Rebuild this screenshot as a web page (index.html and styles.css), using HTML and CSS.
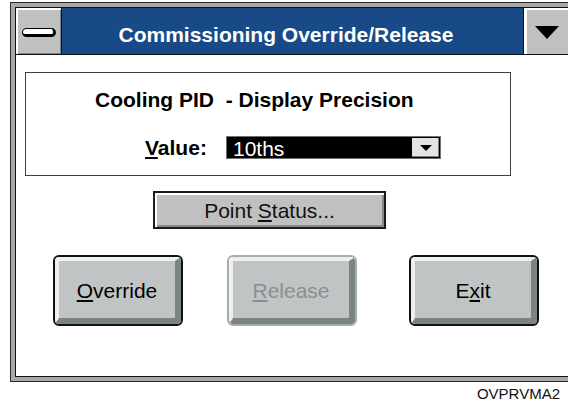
FILE: index.html
```html
<!DOCTYPE html>
<html>
<head>
<meta charset="UTF-8">
<link rel="stylesheet" href="styles.css">
</head>
<body>
 <div class="window">
  <div class="frame">
   <div class="titlebar">
     <div class="sysmenu"><span class="pill"></span></div>
     <div class="caption">Commissioning Override/Release</div>
     <div class="dropbtn"><span class="tri"></span></div>
   </div>
   <div class="client">
     <div class="group">
       <div class="heading">Cooling PID&nbsp; - Display Precision</div>
       <div class="valuerow">
         <span class="label"><u>V</u>alue:</span>
         <div class="combo">
           <span class="combotext">10ths</span>
           <span class="comboarrow"><span class="smalltri"></span></span>
         </div>
       </div>
     </div>
     <div class="btn_status"><span class="face">Point <u>S</u>tatus...</span></div>
     <div class="actions">
       <div class="bigbtn"><span class="bevel"><u>O</u>verride</span></div>
       <div class="bigbtn disabled"><span class="bevel"><u>R</u>elease</span></div>
       <div class="bigbtn exit"><span class="bevel">E<u>x</u>it</span></div>
     </div>
   </div>
  </div>
 </div>
 <div class="figid">OVPRVMA2</div>
</body>
</html>
```

FILE: styles.css
```css
body {
  margin: 0;
  overflow: hidden;
  width: 568px;
  height: 404px;
  background: #fff;
  font-family: "Liberation Sans", Arial, sans-serif;
}

/* window is cut off by the right edge of the picture */
.window {
  margin: 2px 0 0 10px;
  width: 553px;
  height: 370px;
  border: 1px solid #2a2a2a;
  border-right: none;
  padding: 4px 0 4px 4px;
  background: #a8a8a8;
}

.frame {
  height: 368px;
  border: 1px solid #111;
  border-right: none;
  background: #fff;
  display: flex;
  flex-direction: column;
}

.titlebar {
  display: flex;
  height: 46px;
  border-bottom: 1px solid #111;
  flex: none;
}

.sysmenu {
  width: 45px;
  background: #c0c0c0;
  border-right: 1px solid #111;
  box-shadow: inset 2px 2px 0 #fff, inset -1px -1px 0 #808080;
  display: flex;
  align-items: center;
  justify-content: center;
}

.pill {
  width: 30px;
  height: 5px;
  background: #fff;
  border: 1px solid #000;
  border-right-width: 3px;
  border-bottom-width: 3px;
  border-radius: 5px;
  margin-top: 2px;
}

.caption {
  width: 448px;
  padding-right: 13px;
  background: #174a86;
  color: #fff;
  font-weight: bold;
  font-size: 21px;
  line-height: 38px;
  text-align: center;
  padding-top: 8px;
  height: 38px;
  border-right: 1px solid #111;
}

.dropbtn {
  flex: 1;
  background: #c0c0c0;
  box-shadow: inset 2px 2px 0 #fff;
  display: flex;
  align-items: center;
  justify-content: center;
  margin-left: 1px;
}

.tri {
  width: 0;
  height: 0;
  border-left: 12px solid transparent;
  border-right: 12px solid transparent;
  border-top: 13px solid #000;
  margin-top: 3px;
}

.client {
  padding: 17px 0 0 9px;
}

.group {
  width: 484px;
  height: 102px;
  border: 1px solid #404040;
}

.heading {
  margin: 15px 0 0 69px;
  font-weight: bold;
  font-size: 21px;
  line-height: 24px;
  white-space: nowrap;
}

.valuerow {
  display: flex;
  align-items: center;
  margin: 24px 0 0 119px;
  height: 23px;
}

.label {
  font-weight: bold;
  font-size: 21px;
  width: 81px;
}

.combo {
  width: 213px;
  height: 21px;
  border: 1px solid #707070;
  background: #000;
  display: flex;
  align-items: center;
  justify-content: space-between;
}

.combotext {
  color: #fff;
  font-size: 21px;
  line-height: 21px;
  padding-left: 6px;
  margin-top: 2px;
}

.comboarrow {
  width: 27px;
  height: 19px;
  margin-right: 1px;
  background: #e4e4e4;
  box-shadow: inset -1px -1px 0 #808080;
  display: flex;
  align-items: center;
  justify-content: center;
}

.smalltri {
  width: 0;
  height: 0;
  border-left: 6px solid transparent;
  border-right: 6px solid transparent;
  border-top: 6px solid #000;
}

.btn_status {
  margin: 15px 0 0 128px;
  width: 229px;
  height: 34px;
  border: 2px solid #1a1a1a;
  background: #c0c0c0;
  box-shadow: inset 2px 2px 0 #fff, inset -2px -2px 0 #8a8a8a;
  display: flex;
  align-items: center;
  justify-content: center;
}

.face {
  font-size: 21px;
  color: #111;
  margin-top: 1px;
}

.actions {
  display: flex;
  margin: 26px 0 0 28px;
}

.bigbtn {
  width: 126px;
  height: 67px;
  border: 2px solid #111;
  border-radius: 6px;
  display: flex;
  overflow: hidden;
}

.bigbtn + .bigbtn {
  margin-left: 44px;
}

.bigbtn.exit {
  margin-left: 52px;
}

.bevel {
  flex: 1;
  background: #c0c4c4;
  border-top: 4px solid #eef0f0;
  border-left: 4px solid #eef0f0;
  border-right: 6px solid #7b8383;
  border-bottom: 6px solid #7b8383;
  border-radius: 4px;
  display: flex;
  align-items: center;
  justify-content: center;
  padding-top: 3px;
  font-size: 21px;
  color: #000;
}

.bigbtn.disabled {
  border-color: #a8acac;
}

.bigbtn.disabled .bevel {
  color: #8c8f8f;
}

.figid {
  margin-top: 3px;
  padding-right: 8px;
  text-align: right;
  font-size: 15px;
  line-height: 17px;
  color: #111;
}
```
